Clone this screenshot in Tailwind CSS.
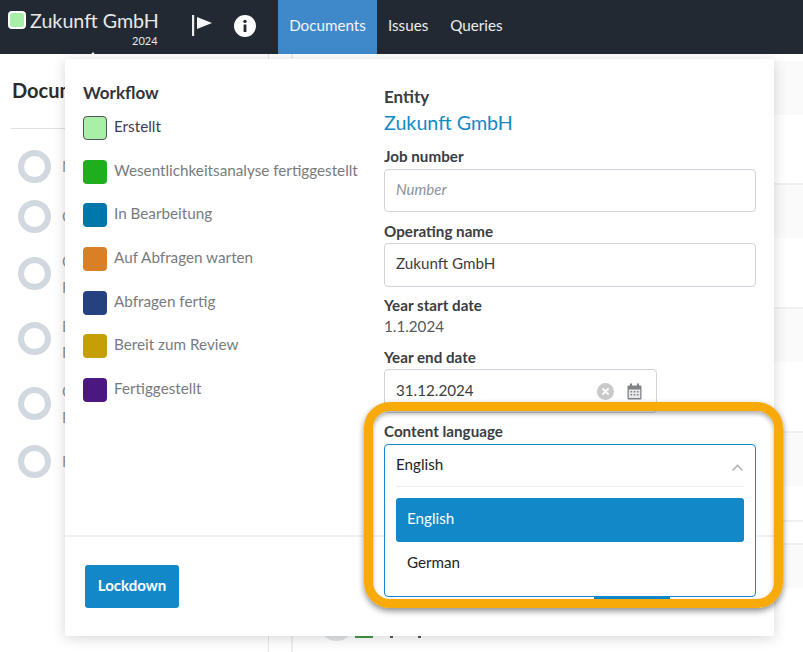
<!DOCTYPE html>
<html><head><meta charset="utf-8">
<script src="https://cdn.jsdelivr.net/npm/@tailwindcss/browser@4"></script>
</head>
<body class="m-0 bg-white font-['Lato','Liberation_Sans',sans-serif]">
<div class="relative w-[803px] h-[652px] overflow-hidden bg-white">
  <header class="flex items-stretch h-[54px] bg-[#222932] text-white">
    <div class="relative w-[278px] shrink-0">
      <div class="absolute left-[8px] top-[11px] w-[18px] h-[18px] rounded-[4px] bg-[#a8f0a8] border-2 border-white"></div>
      <div class="absolute left-[30px] top-[7px] text-[19.7px] leading-[28px] text-[#e8e8e8]">Zukunft GmbH</div>
      <div class="absolute left-[132px] top-[33px] text-[11px] leading-[16px] text-[#e8e8e8]">2024</div>
      <svg class="absolute left-[191px] top-[15px]" width="22" height="22" viewBox="0 0 22 22"><rect x="1" y="0" width="2.200" height="21" fill="#ececec"/><path d="M6 2 21 8 6 14Z" fill="#f6f6f6"/></svg>
      <svg class="absolute left-[234px] top-[15px]" width="22" height="22" viewBox="0 0 22 22"><circle cx="11" cy="11" r="11" fill="#fff"/><circle cx="11" cy="6.400" r="1.700" fill="#222932"/><rect x="9.600" y="9.500" width="2.800" height="7.500" fill="#222932"/></svg>
    </div>
    <nav class="flex text-[15.2px] pb-0">
      <a class="flex items-center w-[99px] justify-center pb-[3px] bg-[#3f88c9] text-[#f2f6fa]">Documents</a>
      <a class="flex items-center pb-[3px] px-[11px] text-[#eeeeee]">Issues</a>
      <a class="flex items-center pb-[3px] pl-[11px] text-[#eeeeee]">Queries</a>
    </nav>
  </header>

  <main class="flex h-[598px]">
    <aside class="w-[269px] shrink-0 border-r border-[#e4e6e9] pl-[11px]">
      <h2 class="pt-[23px] pb-[25px] pl-[1px] text-[20px] leading-[26px] font-bold text-[#2b2b2b] border-b border-[#dfe2e5]">Documents</h2>
      <ul class="mt-[12px] pl-[7px] text-[15px] leading-[26px] text-[#8b929a]">
        <li class="flex items-center gap-[11px] h-[50px]"><span class="w-[33px] h-[33px] rounded-full border-[6px] border-[#d2d8df]"></span><span>N</span></li>
        <li class="flex items-center gap-[11px] h-[50px]"><span class="w-[33px] h-[33px] rounded-full border-[6px] border-[#d2d8df]"></span><span>C</span></li>
        <li class="flex items-center gap-[11px] h-[65px]"><span class="w-[33px] h-[33px] rounded-full border-[6px] border-[#d2d8df]"></span><span>C<br>F</span></li>
        <li class="flex items-center gap-[11px] h-[65px]"><span class="w-[33px] h-[33px] rounded-full border-[6px] border-[#d2d8df]"></span><span>E<br>F</span></li>
        <li class="flex items-center gap-[11px] h-[65px]"><span class="w-[33px] h-[33px] rounded-full border-[6px] border-[#d2d8df]"></span><span>C<br>F</span></li>
        <li class="flex items-center gap-[11px] h-[50px]"><span class="w-[33px] h-[33px] rounded-full border-[6px] border-[#d2d8df]"></span><span>F</span></li>
      </ul>
    </aside>
    <div class="w-[24px] shrink-0 border-r-2 border-[#eceef0]"></div>
    <section class="flex-1 flex flex-col">
      <div class="h-[7px] bg-white"></div>
      <div class="h-[54px] bg-[#fafafa]"></div>
      <div class="h-[70px] border-b-2 border-[#f1f1f1]"></div>
      <div class="h-[53px] bg-[#fafafa]"></div>
      <div class="h-[71px] border-b-2 border-[#f1f1f1]"></div>
      <div class="h-[53px] bg-[#fafafa]"></div>
      <div class="h-[71px] border-b-2 border-[#f1f1f1]"></div>
      <div class="h-[53px] bg-[#fafafa]"></div>
      <div class="h-[36px] border-b-2 border-[#f1f1f1]"></div>
      <div class="h-[23px] border-b-2 border-[#f1f1f1]"></div>
      <div class="h-[43px] bg-[#fafafa]"></div>
    </section>
  </main>

  <div class="absolute left-[320px] top-[608px] w-[33px] h-[33px] rounded-full border-[6px] border-[#e2e5e8]"></div>
  <div class="absolute left-[355px] top-[636px] w-[18px] h-[2px] bg-[#3f9a45]"></div>
  <div class="absolute left-[390px] top-[636px] w-[3px] h-[2px] bg-[#555a60]"></div>
  <div class="absolute left-[418px] top-[636px] w-[3px] h-[2px] bg-[#555a60]"></div>

  <div class="absolute left-[87px] top-[52px] w-0 h-0 border-x-[6px] border-x-transparent border-b-[7px] border-b-white"></div>

  <div class="absolute left-[65px] top-[59px] w-[709px] h-[577px] bg-white rounded-[2px] shadow-[0_2px_14px_rgba(0,0,0,0.16)] flex flex-col">
    <div class="flex h-[476px] shrink-0">
      <div class="w-[319px] shrink-0 pl-[18px] pt-[22px]">
        <h3 class="text-[17px] leading-[24px] font-bold text-[#2f3540] mb-[11px]">Workflow</h3>
        <ul class="flex flex-col gap-[19.7px] text-[15.25px] leading-[20px] text-[#777b80]">
          <li class="flex gap-[7px]"><span class="w-[24px] h-[24px] rounded-[4px] bg-[#a8f0a8] border border-[#555]"></span><span class="text-[#3a4048]">Erstellt</span></li>
          <li class="flex gap-[7px]"><span class="w-[24px] h-[24px] rounded-[4px] bg-[#1eae1e]"></span><span>Wesentlichkeitsanalyse fertiggestellt</span></li>
          <li class="flex gap-[7px]"><span class="w-[24px] h-[24px] rounded-[4px] bg-[#0077aa]"></span><span>In Bearbeitung</span></li>
          <li class="flex gap-[7px]"><span class="w-[24px] h-[24px] rounded-[4px] bg-[#d97f26]"></span><span>Auf Abfragen warten</span></li>
          <li class="flex gap-[7px]"><span class="w-[24px] h-[24px] rounded-[4px] bg-[#25417f]"></span><span>Abfragen fertig</span></li>
          <li class="flex gap-[7px]"><span class="w-[24px] h-[24px] rounded-[4px] bg-[#c49f06]"></span><span>Bereit zum Review</span></li>
          <li class="flex gap-[7px]"><span class="w-[24px] h-[24px] rounded-[4px] bg-[#4b1780]"></span><span>Fertiggestellt</span></li>
        </ul>
      </div>
      <div class="w-[372px] shrink-0 pt-[26px] text-[#3a3d42]">
        <div class="text-[17px] leading-[24px] font-bold">Entity</div>
        <div class="text-[19.7px] leading-[28px] text-[#1288c8] mb-[8px]">Zukunft GmbH</div>
        <label class="block text-[15.2px] leading-[22px] font-bold">Job number</label>
        <div class="flex items-center h-[43px] mt-[2px] mb-[8px] px-[11px] pb-[2px] border border-[#cfd4da] rounded-[4px] text-[15px] italic text-[#8b929a]">Number</div>
        <label class="block text-[15.2px] leading-[22px] font-bold">Operating name</label>
        <div class="flex items-center h-[44px] mt-[1px] mb-[7px] px-[11px] pb-[3px] border border-[#cfd4da] rounded-[4px] text-[15.2px] text-[#3a3d42]">Zukunft GmbH</div>
        <label class="block text-[15.2px] leading-[22px] font-bold">Year start date</label>
        <div class="text-[15.2px] leading-[20px] text-[#55595e] mb-[10px]">1.1.2024</div>
        <label class="block text-[15.2px] leading-[22px] font-bold">Year end date</label>
        <div class="flex items-center justify-between w-[273px] h-[44px] mt-[1px] pl-[11px] pr-[13px] border border-[#cfd4da] rounded-[4px] text-[15.2px] text-[#3a3d42]">
          <span class="pb-[2px]">31.12.2024</span>
          <span class="flex items-center gap-[13px] pr-[1px]">
            <svg width="17" height="17" viewBox="0 0 17 17"><circle cx="8.500" cy="8.500" r="8.500" fill="#c9c9c9"/><path d="M6 6 11 11M11 6 6 11" stroke="#fff" stroke-width="1.800" stroke-linecap="round"/></svg>
            <svg width="15" height="17" viewBox="0 0 15 17"><path d="M3 0.500h2v2h5v-2h2v2h1.500a1 1 0 0 1 1 1V15.500a1 1 0 0 1-1 1h-12a1 1 0 0 1-1-1V3.500a1 1 0 0 1 1-1H3Z" fill="#7f8388"/><rect x="1.800" y="6.500" width="11.400" height="8.500" fill="#e8e9ea"/><path d="M3.500 8h1.600v1.400H3.500ZM6.700 8h1.600v1.400H6.700ZM9.900 8h1.600v1.400H9.900ZM3.500 11h1.600v1.400H3.500ZM6.700 11h1.600v1.400H6.700ZM9.900 11h1.600v1.400H9.900Z" fill="#7f8388"/></svg>
          </span>
        </div>
      </div>
    </div>
    <div class="flex-1 border-t-2 border-[#f1f1f1] pl-[20px] pt-[28px]">
      <button class="w-[94px] h-[43px] pb-[3px] rounded-[3px] bg-[#1288c8] text-white text-[15px] font-bold">Lockdown</button>
    </div>
    <div class="absolute left-[529px] top-[538px] w-[76px] h-[2px] bg-[#1288c8]"></div>
  </div>

  <div class="absolute left-[384px] top-[420px] w-[372px]">
    <label class="block text-[15.2px] leading-[22px] font-bold text-[#3a3d42] mb-[2px]">Content language</label>
    <div class="h-[153px] bg-white border border-[#1288c8] rounded-[4px] px-[11px]">
      <div class="relative h-[42px] flex items-center pb-[2px] text-[15.2px] text-[#222] border-b border-[#ececec]">
        English
        <svg class="absolute right-[0px] top-[18px]" width="13" height="9" viewBox="0 0 13 9"><path d="M1.500 7.500 6.500 2.500 11.500 7.500" fill="none" stroke="#b4b4b4" stroke-width="1.600"/></svg>
      </div>
      <div class="mt-[11px] flex items-center h-[44px] pl-[11px] pb-[3px] rounded-[3px] bg-[#1288c8] text-white text-[15.2px]">English</div>
      <div class="flex items-center h-[44px] pl-[11px] pb-[3px] text-[15.2px] text-[#222]">German</div>
    </div>
  </div>

  <div class="absolute left-[364px] top-[402px] w-[419px] h-[206px] rounded-[26px] border-[9px] border-[#f8aa09] shadow-[0_3px_6px_rgba(0,0,0,0.45),inset_0_3px_4px_rgba(0,0,0,0.3)] pointer-events-none"></div>
</div>
</body></html>
